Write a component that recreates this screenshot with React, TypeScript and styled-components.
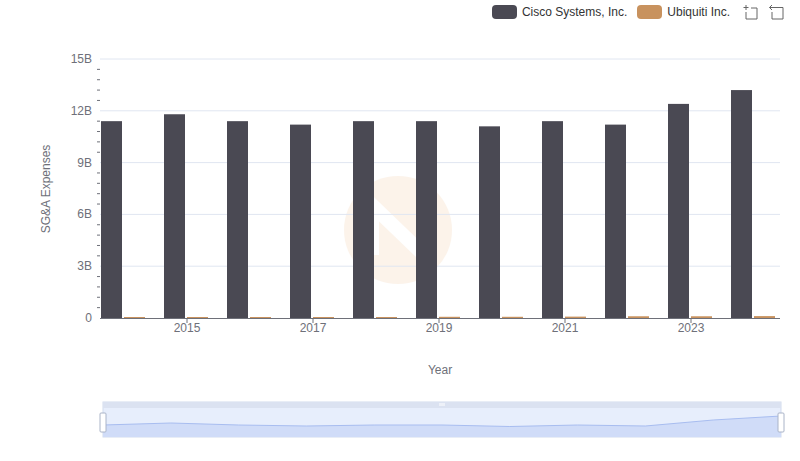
import styled, { createGlobalStyle } from 'styled-components';

const Global = createGlobalStyle`
  body { margin: 0; font-family: "Liberation Sans", Arial, sans-serif; background: #fff; }
`;

const Page = styled.div`
  position: relative;
  width: 800px;
  height: 461px;
  overflow: hidden;
`;

const Legend = styled.div`
  position: absolute;
  top: 4px;
  right: 16px;
  display: flex;
  align-items: center;
  gap: 10px;
  font-size: 12px;
  color: #333;
`;

const LegendItem = styled.div`
  display: flex;
  align-items: center;
  gap: 5px;
`;

const Swatch = styled.span<{ $color: string }>`
  width: 25px;
  height: 14px;
  border-radius: 4px;
  background: ${({ $color }) => $color};
`;

const Tools = styled.div`
  display: flex;
  gap: 10px;
  margin-left: 2px;
`;

const cisco = [11.4, 11.8, 11.4, 11.2, 11.4, 11.4, 11.1, 11.4, 11.2, 12.4, 13.2];
const ubiq = [0.03, 0.03, 0.04, 0.05, 0.05, 0.07, 0.07, 0.08, 0.1, 0.1, 0.11];
const x0 = 100;
const step = 63;
const yv = (v: number) => 318 - (v / 15) * 259;

export default function App() {
  const majors = [0, 3, 6, 9, 12, 15];
  const minors: number[] = [];
  for (let i = 0; i < 25; i++) if (i % 5 !== 0) minors.push(i * 0.6);
  const spark = cisco.map((v, i) => `${103 + (i / 10) * 678},${437 - ((v - 9) / 5) * 25}`);
  return (
    <Page>
      <Global />
      <Legend>
        <LegendItem><Swatch $color="#4a4953" />Cisco Systems, Inc.</LegendItem>
        <LegendItem><Swatch $color="#c8925e" />Ubiquiti Inc.</LegendItem>
        <Tools>
          <svg width="16" height="16" viewBox="0 0 16 16" fill="none" stroke="#666" strokeWidth="1">
            <path d="M4 1v5M1.5 3.5h5M4 8v7h11V4H9" />
          </svg>
          <svg width="16" height="16" viewBox="0 0 16 16" fill="none" stroke="#666" strokeWidth="1">
            <path d="M4 1L1.5 3.5 4 6M1.5 3.5H15V15H4V8" />
          </svg>
        </Tools>
      </Legend>
      <svg width="800" height="461" style={{ display: 'block' }} fontFamily="Liberation Sans, Arial, sans-serif">
        <g opacity="0.12">
          <circle cx="398" cy="230" r="54" fill="#e8a25c" />
          <path d="M372 255V205l52 50V205" stroke="#fff" strokeWidth="14" fill="none" />
        </g>
        {majors.map((m) => (
          <g key={m}>
            {m > 0 && <line x1={x0} x2={780} y1={yv(m)} y2={yv(m)} stroke="#e0e6f1" />}
            <text x={92} y={yv(m) + 4} textAnchor="end" fontSize="12" fill="#6e7079">{m === 0 ? '0' : `${m}B`}</text>
          </g>
        ))}
        {minors.map((m) => (
          <line key={m} x1={97} x2={100} y1={yv(m)} y2={yv(m)} stroke="#6e7079" />
        ))}
        {cisco.map((v, i) => (
          <rect key={i} x={x0 + i * step + 1} y={yv(v)} width={21} height={318 - yv(v)} fill="#4a4953" />
        ))}
        {ubiq.map((v, i) => (
          <rect key={i} x={x0 + i * step + 24} y={318 - Math.max(1, (v / 15) * 259)} width={21} height={Math.max(1, (v / 15) * 259)} fill="#c8925e" />
        ))}
        <line x1={x0} x2={780} y1={318.5} y2={318.5} stroke="#6e7079" />
        {[1, 3, 5, 7, 9].map((i) => (
          <g key={i}>
            <line x1={x0 + i * step + 24} x2={x0 + i * step + 24} y1={318} y2={323} stroke="#6e7079" />
            <text x={x0 + i * step + 24} y={332} textAnchor="middle" fontSize="12" fill="#6e7079">{2014 + i}</text>
          </g>
        ))}
        <text x={440} y={374} textAnchor="middle" fontSize="12" fill="#6e7079">Year</text>
        <text transform="translate(50 189) rotate(-90)" textAnchor="middle" fontSize="12" fill="#6e7079">SG&amp;A Expenses</text>
        <rect x={103} y={402} width={678} height={35} fill="#e7eefc" stroke="#d2dbee" />
        <rect x={103} y={402} width={678} height={6} fill="#dbe2f1" />
        <path d="M440 403v3M442 403v3M444 403v3" stroke="#fff" />
        <path d={`M103,437 L${spark.join(' L')} L781,437 Z`} fill="#d0dcf8" stroke="none" />
        <polyline points={spark.join(' ')} fill="none" stroke="#a8bdf0" />
        <rect x={100} y={413} width={6} height={19} rx={1} fill="#fff" stroke="#aab4c8" />
        <rect x={778} y={413} width={6} height={19} rx={1} fill="#fff" stroke="#aab4c8" />
      </svg>
    </Page>
  );
}
